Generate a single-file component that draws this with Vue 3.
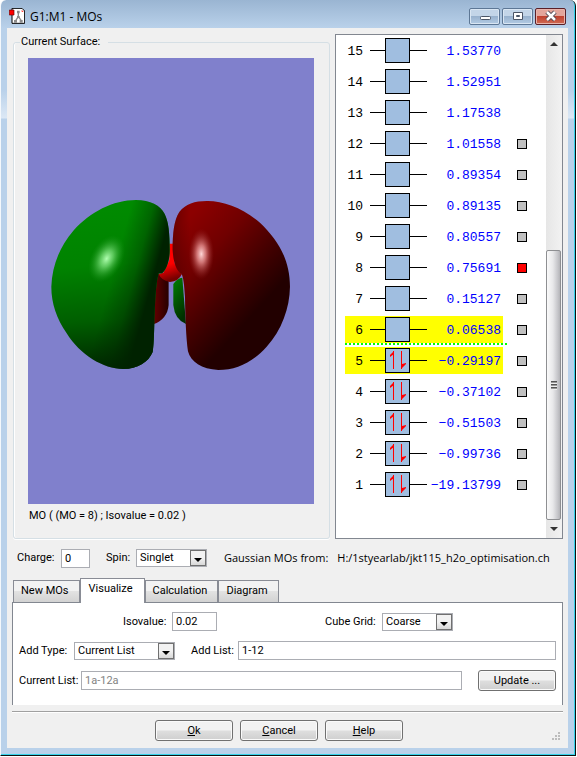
<template>
  <div class="window">
    <header class="titlebar">
      <svg class="app-icon" width="16" height="16" viewBox="0 0 48 48">
        <path d="M9 1h30l8 8v37H9z" fill="#fff" stroke="#000" stroke-width="3"/>
        <path d="M28 12v16M28 26l-8 12M28 26l9 12" stroke="#8a8a8a" stroke-width="4" fill="none"/>
        <path d="M24 8h8v8h-8zM15 36h9v8h-9zM32 36h9v8h-9zM24 24h8v6h-8z" fill="#8a8a8a"/>
        <path d="M38 6l6 5h-6z" fill="#f00"/>
        <path d="M1 6h14v15H1z" fill="#f00" stroke="#600" stroke-width="2"/>
      </svg>
      <h1 class="title">G1:M1 - MOs</h1>
      <div class="window-buttons">
        <button type="button" class="window-button" aria-label="Minimize">
          <svg width="12" height="12" viewBox="0 0 12 12">
            <rect x="1.5" y="6.5" width="10" height="3" rx="1" fill="#fff" stroke="#4b5566"/>
          </svg>
        </button>
        <button type="button" class="window-button" aria-label="Maximize">
          <svg width="12" height="12" viewBox="0 0 12 12">
            <path d="M1.500 2.500h9v7h-9zM4.500 5.500v1h3v-1z" fill="#fff" fill-rule="evenodd" stroke="#4b5566"/>
          </svg>
        </button>
        <button type="button" class="window-button close" aria-label="Close">
          <svg width="12" height="12" viewBox="0 0 12 12">
            <path d="M2 2l8 8M10 2l-8 8" stroke="#4d4550" stroke-width="4.500"/>
            <path d="M2 2l8 8M10 2l-8 8" stroke="#fff" stroke-width="2.500"/>
          </svg>
        </button>
      </div>
    </header>

    <main class="client">
      <div class="top">
        <fieldset class="surface">
          <legend>Current Surface:</legend>
          <svg class="canvas" viewBox="0 0 286 446">
            <defs>
              <linearGradient id="greenBase" gradientUnits="userSpaceOnUse" x1="210" y1="60" x2="250" y2="530">
                <stop offset="0" stop-color="#008a00"/>
                <stop offset="0.35" stop-color="#008200"/>
                <stop offset="0.7" stop-color="#005e00"/>
                <stop offset="1" stop-color="#002800"/>
              </linearGradient>
              <linearGradient id="greenShade" gradientUnits="userSpaceOnUse" x1="256" y1="220" x2="380" y2="254">
                <stop offset="0" stop-color="#002400" stop-opacity="0"/>
                <stop offset="0.5" stop-color="#002400" stop-opacity="0.35"/>
                <stop offset="0.95" stop-color="#002200"/>
              </linearGradient>
              <linearGradient id="redBase" gradientUnits="userSpaceOnUse" x1="450" y1="110" x2="700" y2="340">
                <stop offset="0" stop-color="#8c0000"/>
                <stop offset="0.35" stop-color="#700000"/>
                <stop offset="0.7" stop-color="#440000"/>
                <stop offset="1" stop-color="#220000"/>
              </linearGradient>
              <linearGradient id="redShade" gradientUnits="userSpaceOnUse" x1="425" y1="0" x2="480" y2="0">
                <stop offset="0" stop-color="#300000" stop-opacity="0.4"/>
                <stop offset="1" stop-color="#300000" stop-opacity="0"/>
              </linearGradient>
              <linearGradient id="smallRed" x1="0" y1="0" x2="1" y2="0">
                <stop offset="0" stop-color="#660000"/>
                <stop offset="1" stop-color="#260000"/>
              </linearGradient>
              <linearGradient id="smallGreen" x1="0" y1="0" x2="0.4" y2="1">
                <stop offset="0" stop-color="#008000"/>
                <stop offset="1" stop-color="#003000"/>
              </linearGradient>
              <linearGradient id="atomRed" x1="0" y1="0" x2="0.2" y2="1">
                <stop offset="0.6" stop-color="#f00"/>
                <stop offset="1" stop-color="#700"/>
              </linearGradient>
              <radialGradient id="shineGreen">
                <stop offset="0" stop-color="#b0ffb0"/>
                <stop offset="0.35" stop-color="#6cd46c" stop-opacity="0.85"/>
                <stop offset="1" stop-color="#189018" stop-opacity="0"/>
              </radialGradient>
              <radialGradient id="shineRed">
                <stop offset="0" stop-color="#ffd8d8"/>
                <stop offset="0.35" stop-color="#e08888" stop-opacity="0.85"/>
                <stop offset="1" stop-color="#902020" stop-opacity="0"/>
              </radialGradient>
            </defs>
            <rect width="286" height="446" fill="#8080cc"/>
            <g transform="translate(2 132) scale(0.3333)">
              <path d="M378 252Q396 244 416 272V345Q412 388 370 403z" fill="url(#smallRed)"/>
              <path d="M430 282Q442 264 457 263L468 402Q434 388 430 345z" fill="url(#smallGreen)"/>
              <path d="M418 161H430L434 220L456 252Q446 274 420 276Q394 272 386 252L400 248L418 210z" fill="url(#atomRed)"/>
              <path :d="greenLobe" fill="url(#greenBase)"/>
              <path :d="greenLobe" fill="url(#greenShade)"/>
              <ellipse cx="230" cy="206" rx="48" ry="76" transform="rotate(28 230 206)" fill="url(#shineGreen)"/>
              <path :d="redLobe" fill="url(#redBase)"/>
              <path :d="redLobe" fill="url(#redShade)"/>
              <ellipse cx="514" cy="192" rx="38" ry="76" fill="url(#shineRed)"/>
            </g>
          </svg>
          <p class="caption">MO ( (MO = 8) ; Isovalue = 0.02 )</p>
        </fieldset>

        <section class="orbitals">
          <ul class="orbital-list">
            <li
                v-for="mo in orbitals"
                :key="mo.id"
                class="orbital"
                :class="{ frontier: mo.id === 5 || mo.id === 6, lumo: mo.id === 6 }"
            >
              <div class="level">
                <span class="number">{{ mo.id }}</span>
                <span class="line">
                  <span class="box">
                    <svg v-if="mo.id <= 5" width="23" height="23" viewBox="0 0 23 23">
                      <path d="M7 2h1v18H7zM15 2h1v18h-1z" fill="#f00"/>
                      <path d="M8 2v3L4 8V6zM15 20v-6l1 1 4-1v1z" fill="#f00"/>
                    </svg>
                  </span>
                </span>
                <span class="energy">{{ mo.energy }}</span>
              </div>
              <input
                  v-if="mo.id <= 12"
                  type="checkbox"
                  class="marker"
                  :checked="mo.id === 8"
                  :aria-label="'MO ' + mo.id"
              >
            </li>
          </ul>
          <div class="scrollbar">
            <span class="arrow up"></span>
            <div class="thumb"><span class="grip"></span></div>
            <span class="arrow down"></span>
          </div>
        </section>
      </div>

      <div class="molecule">
        <label for="charge" class="charge-label">Charge:</label>
        <input id="charge" v-model="charge" type="text" class="charge">
        <label for="spin" class="spin-label">Spin:</label>
        <div class="select narrow">
          <select id="spin"><option>Singlet</option></select>
          <span class="drop"></span>
        </div>
        <p class="source"><span>Gaussian MOs from:</span><span>H:/1styearlab/jkt115_h2o_optimisation.ch</span></p>
      </div>

      <div class="tabs" role="tablist">
        <button
            v-for="tab in tabs"
            :key="tab"
            type="button"
            role="tab"
            class="tab"
            :class="{ active: tab === activeTab }"
            :aria-selected="tab === activeTab"
            @click="activeTab = tab"
        >{{ tab }}</button>
      </div>

      <div class="panel">
        <div class="row">
          <label for="isovalue" class="iso-label">Isovalue:</label>
          <input id="isovalue" v-model="isovalue" type="text" class="isovalue">
          <label for="grid" class="grid-label">Cube Grid:</label>
          <div class="select narrow">
            <select id="grid"><option>Coarse</option></select>
            <span class="drop"></span>
          </div>
        </div>
        <div class="row">
          <label for="add-type" class="type-label">Add Type:</label>
          <div class="select wide">
            <select id="add-type"><option>Current List</option></select>
            <span class="drop"></span>
          </div>
          <label for="add-list" class="list-label">Add List:</label>
          <input id="add-list" v-model="addList" type="text" class="grow">
        </div>
        <div class="row">
          <label for="current-list" class="current-label">Current List:</label>
          <input id="current-list" value="1a-12a" type="text" class="grow" disabled>
          <button type="button" class="push update">Update ...</button>
        </div>
      </div>

      <footer class="actions">
        <button type="button" class="push"><u>O</u>k</button>
        <button type="button" class="push"><u>C</u>ancel</button>
        <button type="button" class="push"><u>H</u>elp</button>
        <svg class="resize" width="9" height="9" viewBox="0 0 9 9">
          <path d="M6 0h2v2H6zM3 3h2v2H3zM6 3h2v2H6zM0 6h2v2H0zM3 6h2v2H3zM6 6h2v2H6z" fill="#bcbcbc"/>
        </svg>
      </footer>
    </main>
  </div>
</template>

<script setup>
import { ref } from 'vue';

const charge = ref('0');
const isovalue = ref('0.02');
const addList = ref('1-12');

const tabs = ['New MOs', 'Visualize', 'Calculation', 'Diagram'];
const activeTab = ref('Visualize');

const orbitals = [
  { id: 15, energy: '1.53770' },
  { id: 14, energy: '1.52951' },
  { id: 13, energy: '1.17538' },
  { id: 12, energy: '1.01558' },
  { id: 11, energy: '0.89354' },
  { id: 10, energy: '0.89135' },
  { id: 9, energy: '0.80557' },
  { id: 8, energy: '0.75691' },
  { id: 7, energy: '0.15127' },
  { id: 6, energy: '0.06538' },
  { id: 5, energy: '−0.29197' },
  { id: 4, energy: '−0.37102' },
  { id: 3, energy: '−0.51503' },
  { id: 2, energy: '−0.99736' },
  { id: 1, energy: '−19.13799' }
];

const greenLobe = 'M318 30C360 30 392 46 404 72C416 96 419 130 419 180C419 215 408 240 396 250L386 250'
    + 'C378 280 376 320 373 400C372 440 371 470 368 486C356 516 322 537 280 537C220 537 150 495 110 430'
    + 'C80 385 64 340 64 290C66 230 88 170 130 122C180 66 250 30 318 30z';
const redLobe = 'M530 33C580 32 640 55 690 98C745 150 780 210 780 290C779 355 755 420 710 470'
    + 'C670 515 620 540 565 540C515 538 482 515 474 484C468 440 466 380 465 320C463 285 460 262 455 252'
    + 'C438 242 430 215 428 180C428 130 432 90 448 66C466 42 495 33 530 33z';
</script>

<style>
body {
  margin: 0;
  background: #fff;
}
</style>

<style scoped>
.window {
  box-sizing: border-box;
  margin-right: 1px;
  padding: 0 7px 7px 6px;
  border: 1px solid #f4f8fc;
  border-top: 0;
  border-right-color: #111;
  border-bottom-color: #111;
  border-radius: 6px 6px 0 0;
  background: linear-gradient(#9ab5d2, #b9d1ea 28px, #b9d1ea 90px, #dce8f5 118px, #b9d1ea 119px);
  box-shadow: inset -1px -1px #34d3ea;
  font: 11px/16px Roboto, Arial, sans-serif;
  color: #000;
}

.titlebar {
  display: flex;
  align-items: center;
  height: 28px;
  padding: 0 2px;
}

.app-icon {
  margin-top: 4px;
}

.title {
  flex: 1;
  margin: 5px 0 0 5px;
  font: 12px/16px "Open Sans", sans-serif;
}

.window-buttons {
  display: flex;
  gap: 2px;
  margin-top: 4px;
}

.window-button {
  display: flex;
  align-items: center;
  justify-content: center;
  width: 31px;
  height: 17px;
  padding: 0;
  border: 1px solid #5d7795;
  border-radius: 2px;
  background: linear-gradient(#c3d5e8 45%, #98b2ce 50%, #b3cbe4);
  box-shadow: inset 0 0 0 1px #d9e6f3;
}

.window-button.close {
  border-color: #5a2028;
  background: linear-gradient(#e3a59b 45%, #c0412f 50%, #d06c55);
  box-shadow: inset 0 0 0 1px #e8b4ac;
}

.client {
  padding: 6px 5px 7px;
  background: #f0f0f0;
}

.top {
  display: flex;
  gap: 5px;
  padding-left: 1px;
}

.surface {
  flex: 1;
  box-sizing: border-box;
  min-width: 0;
  margin: 0;
  padding: 8px 15px 14px 14px;
  border: 1px solid #d5dfe5;
  border-radius: 3px;
  box-shadow: inset 1px 0 #fff, 0 1px #fff;
}

.surface legend {
  height: 16px;
  margin-left: -8px;
  padding: 0 8px 0 1px;
}

.canvas {
  display: block;
  width: 100%;
}

.caption {
  margin: 4px 0 0 1px;
}

.orbitals {
  display: flex;
  box-sizing: border-box;
  width: 228px;
  height: 505px;
  border: 1px solid #828790;
  background: #fff;
}

.orbital-list {
  flex: 1;
  margin: 0;
  padding: 0 0 0 9px;
  list-style: none;
  font: 13px/25px "Liberation Mono", monospace;
}

.orbital {
  position: relative;
  display: flex;
  align-items: center;
  gap: 14px;
  height: 31px;
}

.level {
  display: flex;
  align-items: center;
  width: 158px;
  height: 27px;
}

.frontier .level {
  background: #ff0;
}

/* HOMO / LUMO separator */
.lumo::after {
  content: "";
  position: absolute;
  left: 0;
  bottom: 0;
  width: 162px;
  height: 2px;
  background: repeating-linear-gradient(90deg, #0f0 0 2px, transparent 2px 4px);
}

.number {
  width: 18px;
  padding-top: 2px;
  text-align: right;
}

.line {
  flex: none;
  width: 57px;
  margin-left: 7px;
  background: linear-gradient(#000, #000) center / 100% 1px no-repeat;
}

.box {
  display: block;
  box-sizing: border-box;
  width: 25px;
  height: 25px;
  margin-left: 15px;
  border: 1px solid #000;
  background: #a0bee0;
}

.box svg {
  display: block;
}

.energy {
  flex: 1;
  display: flex;
  justify-content: flex-end;
  padding: 2px 2px 0 0;
  color: #00f;
}

.marker {
  appearance: none;
  width: 10px;
  height: 10px;
  margin: 0;
  border: 1px solid #000;
  background: #c0c0c0;
}

.marker:checked {
  background: #f00;
}

.scrollbar {
  display: flex;
  flex-direction: column;
  align-items: center;
  width: 16px;
  background: linear-gradient(90deg, #e6e6e6, #f2f2f2);
}

.arrow {
  width: 0;
  height: 0;
  margin: 7px 0;
  border: 4px solid transparent;
}

.arrow.up {
  border-top: 0;
  border-bottom-color: #333;
}

.arrow.down {
  border-bottom: 0;
  border-top-color: #333;
}

.thumb {
  display: flex;
  align-self: flex-start;
  align-items: center;
  justify-content: center;
  box-sizing: border-box;
  width: 15px;
  height: 270px;
  margin-top: auto;
  border: 1px solid #8e8f92;
  border-radius: 2px;
  background: linear-gradient(90deg, #fafafa, #e8e8ea 45%, #c8c8cc 80%, #b4b4b8);
}

.grip {
  width: 6px;
  height: 9px;
  background: repeating-linear-gradient(#555 0 1px, #999 1px 2px, #eee 2px 3px);
}

.molecule {
  display: flex;
  align-items: center;
  margin: 9px 0 0 5px;
  height: 20px;
}

.charge-label {
  width: 44px;
}

.spin-label {
  width: 30px;
  margin-left: 16px;
}

input[type="text"],
select {
  box-sizing: border-box;
  min-width: 0;
  height: 19px;
  margin: 0;
  padding: 0 3px;
  border: 1px solid #abadb3;
  border-radius: 0;
  background: #fff;
  font: inherit;
  color: #000;
}

input[type="text"]:disabled {
  color: #838383;
}

.charge {
  width: 29px;
}

.isovalue {
  width: 45px;
}

.select {
  position: relative;
  flex: none;
}

.select.narrow {
  width: 71px;
}

.select.wide {
  width: 101px;
}

select {
  display: block;
  appearance: none;
  width: 100%;
  height: 18px;
}

.drop {
  position: absolute;
  top: 1px;
  right: 1px;
  box-sizing: border-box;
  width: 16px;
  height: 16px;
  border: 1px solid #707070;
  background: linear-gradient(#f2f2f2 50%, #d8d8d8);
  pointer-events: none;
}

.drop::after {
  content: "";
  position: absolute;
  left: 3px;
  top: 7px;
  border: 4px solid transparent;
  border-top-color: #000;
  border-bottom: 0;
}

.source {
  display: flex;
  gap: 9px;
  margin: 0 0 0 17px;
  font: 11px/16px "Open Sans", sans-serif;
  white-space: nowrap;
}

.tabs {
  display: flex;
  align-items: flex-end;
  height: 24px;
  margin: 10px 0 0 1px;
}

.tab {
  box-sizing: border-box;
  height: 22px;
  padding: 0 10px 2px 7px;
  border: 1px solid #898c95;
  border-bottom: 0;
  background: linear-gradient(#f2f2f2 45%, #e2e2e2 50%, #d2d2d2);
  font: inherit;
  color: #000;
}

.tab.active {
  position: relative;
  height: 25px;
  margin-bottom: -1px;
  padding: 0 11px 5px 8px;
  background: #fff;
}

.panel {
  display: flex;
  flex-direction: column;
  gap: 10px;
  padding: 9px 6px 14px;
  border: 1px solid #828790;
  border-bottom: 0;
  background: #fff;
}

.row {
  display: flex;
  align-items: center;
}

.iso-label {
  width: 49px;
  margin-left: 104px;
}

.grid-label {
  width: 57px;
  margin-left: 108px;
}

.type-label {
  width: 55px;
}

.list-label {
  width: 47px;
  margin-left: 16px;
}

.current-label {
  width: 62px;
}

.grow {
  flex: 1;
}

.push {
  box-sizing: border-box;
  width: 78px;
  height: 21px;
  padding: 0;
  border: 1px solid #707070;
  border-radius: 3px;
  background: linear-gradient(#f2f2f2 48%, #dedede 52%, #cfcfcf);
  box-shadow: inset 0 0 0 1px #fafafa;
  font: inherit;
  color: #000;
}

.update {
  margin-left: 16px;
}

.actions {
  position: relative;
  display: flex;
  justify-content: center;
  gap: 7px;
  margin-top: 6px;
  padding: 8px 17px 0 0;
  border-top: 1px solid #a0a0a0;
  box-shadow: inset 0 1px #fff;
}

.resize {
  position: absolute;
  right: 2px;
  bottom: 0;
}
</style>
